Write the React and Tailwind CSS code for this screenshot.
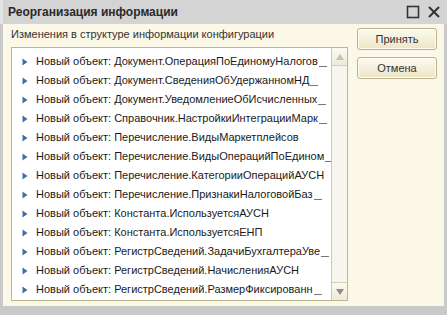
import { useState } from 'react';

const items = [
  ['Новый объект: Документ.ОперацияПоЕдиномуНалогов', true],
  ['Новый объект: Документ.СведенияОбУдержанномНД', true],
  ['Новый объект: Документ.УведомлениеОбИсчисленных', true],
  ['Новый объект: Справочник.НастройкиИнтеграцииМарк', true],
  ['Новый объект: Перечисление.ВидыМаркетплейсов', false],
  ['Новый объект: Перечисление.ВидыОперацийПоЕдином', true],
  ['Новый объект: Перечисление.КатегорииОперацийАУСН', false],
  ['Новый объект: Перечисление.ПризнакиНалоговойБаз', true],
  ['Новый объект: Константа.ИспользуетсяАУСН', false],
  ['Новый объект: Константа.ИспользуетсяЕНП', false],
  ['Новый объект: РегистрСведений.ЗадачиБухгалтераУве', true],
  ['Новый объект: РегистрСведений.НачисленияАУСН', false],
  ['Новый объект: РегистрСведений.РазмерФиксированн', true],
];

function Btn({ children }) {
  return (
    <button className="w-[80px] h-[22px] rounded-[3px] border border-[#b9b28a] bg-gradient-to-b from-[#fdfbf1] to-[#ece5c6] text-[11px] text-[#333] shadow-[inset_0_0_0_1px_#fffdf4]">
      {children}
    </button>
  );
}

export default function App() {
  const [sel] = useState(-1);
  return (
    <div className="w-[447px] h-[315px] bg-[#c9c9c9] flex flex-col" style={{ fontFamily: '"Liberation Sans", Arial, sans-serif' }}>
      <div className="h-[24px] flex items-center bg-[#d4d4d4] border-l-[3px] border-[#e4e4e4] pl-[5px] pr-[6px]">
        <div className="flex-1 text-[12px] font-bold text-[#2a2a2a]">Реорганизация информации</div>
        <svg width="14" height="14" viewBox="0 0 14 14" className="mr-[7px]">
          <rect x="1.5" y="1.5" width="11" height="11" fill="none" stroke="#333" strokeWidth="1.6" />
        </svg>
        <svg width="14" height="14" viewBox="0 0 14 14">
          <path d="M2 2 L12 12 M12 2 L2 12" stroke="#333" strokeWidth="2" />
        </svg>
      </div>
      <div className="flex-1 flex mx-[3px] mb-[9px] bg-[#fbf8e8]">
        <div className="flex flex-col pl-[8px] pt-[4px]">
          <div className="h-[18px] text-[11px] text-[#333] leading-[12px] mb-[1px]">Изменения в структуре информации конфигурации</div>
          <div className="w-[337px] h-[254px] border border-[#bcb68d] bg-white flex">
            <div className="flex-1 pt-[4px] overflow-hidden">
              {items.map(([t, cut], i) => (
                <div key={i} className={`h-[19px] flex items-center text-[11px] text-[#1a1a1a] ${sel === i ? 'bg-[#f6e9a9]' : ''}`}>
                  <svg width="6" height="8" viewBox="0 0 6 8" className="shrink-0 ml-[10px] mr-[8px]">
                    <path d="M0.5 0.5 L5.5 4 L0.5 7.5 Z" fill="#3f6fa6" />
                  </svg>
                  <span className="whitespace-nowrap">{t}</span>
                  {cut && <span className="shrink-0 ml-[1px] mt-[9px] w-[8px] h-px bg-[#777]" />}
                </div>
              ))}
            </div>
            <div className="w-[16px] shrink-0 border-l border-[#cfc9a8] bg-[#f7f5ee] flex flex-col justify-between">
              <div className="h-[18px] border-b border-[#d4cfb3] bg-gradient-to-b from-[#fbfaf3] to-[#efead6] flex items-center justify-center">
                <svg width="8" height="6" viewBox="0 0 8 6"><path d="M4 0 L8 6 L0 6 Z" fill="#c6c2b2" /></svg>
              </div>
              <div className="h-[18px] border-t border-[#d4cfb3] bg-gradient-to-b from-[#fbfaf3] to-[#efead6] flex items-center justify-center">
                <svg width="8" height="6" viewBox="0 0 8 6"><path d="M0 0 L8 0 L4 6 Z" fill="#8e8c84" /></svg>
              </div>
            </div>
          </div>
        </div>
        <div className="flex flex-col gap-[7px] pl-[9px] pt-[4px]">
          <Btn>Принять</Btn>
          <Btn>Отмена</Btn>
        </div>
      </div>
    </div>
  );
}
